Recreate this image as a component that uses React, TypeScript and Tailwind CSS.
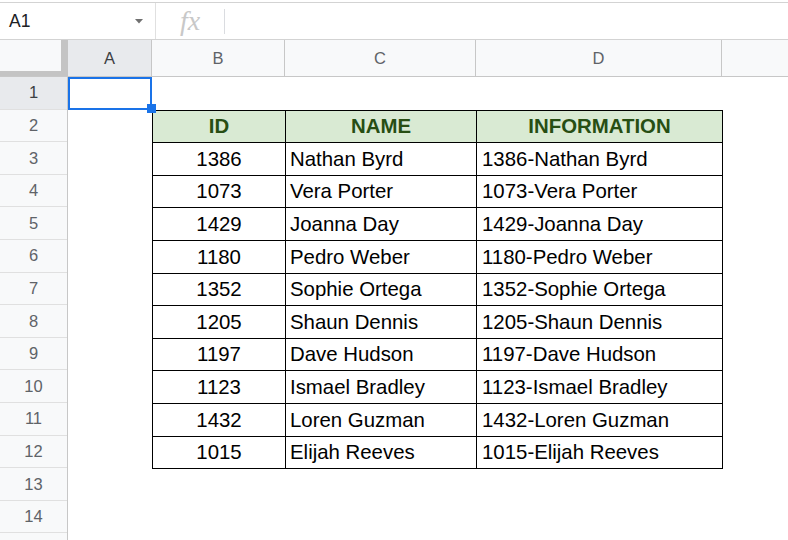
import React from "react";

const rows: [string, string][] = [
  ["1386", "Nathan Byrd"],
  ["1073", "Vera Porter"],
  ["1429", "Joanna Day"],
  ["1180", "Pedro Weber"],
  ["1352", "Sophie Ortega"],
  ["1205", "Shaun Dennis"],
  ["1197", "Dave Hudson"],
  ["1123", "Ismael Bradley"],
  ["1432", "Loren Guzman"],
  ["1015", "Elijah Reeves"],
];

const rowNums = Array.from({ length: 15 }, (_, i) => i + 1);

export default function App() {
  return (
    <div className="w-[788px] h-[540px] overflow-hidden bg-white font-['Liberation_Sans',Arial,sans-serif] relative">
      {/* formula bar */}
      <div className="pt-[2px]">
        <div className="h-[38px] border-t border-b border-[#d3d3d3] flex items-center">
          <div className="w-[156px] h-full flex items-center justify-between pl-[9px] pr-[12px] border-r border-[#e0e0e0]">
            <span className="text-[17.5px] text-[#202124]">A1</span>
            <svg width="8" height="5" viewBox="0 0 8 5">
              <path d="M0 0 L8 0 L4 4.5 Z" fill="#707070" />
            </svg>
          </div>
          <div className="w-[69px] h-full flex items-center">
            <div className="flex-1 flex justify-center">
              <span className="font-['Liberation_Serif',serif] italic text-[28px] text-[#c8c8c8] leading-none">fx</span>
            </div>
            <div className="w-px h-[25px] bg-[#dadce0]" />
          </div>
          <div className="flex-1" />
        </div>
      </div>

      {/* column headers */}
      <div className="h-[37px] flex border-b border-[#c7c7c7] bg-[#f8f9fa] text-[16.5px] text-[#5f6368]">
        <div className="w-[68px] h-full flex flex-col">
          <div className="flex-1 flex">
            <div className="flex-1" />
            <div className="w-[7px] bg-[#c4c4c4]" />
          </div>
          <div className="h-[5px] bg-[#c4c4c4]" />
        </div>
        <div className="w-[84px] h-full flex items-center justify-center bg-[#e8eaed] border-r border-[#c7c7c7] text-[#3c4043]">A</div>
        <div className="w-[133px] h-full flex items-center justify-center border-r border-[#c7c7c7]">B</div>
        <div className="w-[191px] h-full flex items-center justify-center border-r border-[#c7c7c7]">C</div>
        <div className="w-[246px] h-full flex items-center justify-center border-r border-[#c7c7c7]">D</div>
        <div className="flex-1 h-full" />
      </div>

      {/* body */}
      <div className="flex">
        <div className="w-[68px] border-r border-[#c7c7c7] bg-[#f8f9fa] text-[16.5px] text-[#5f6368] shrink-0">
          {rowNums.map((n) => (
            <div
              key={n}
              className={
                n === 1
                  ? "h-[32.6px] flex items-center justify-center border-b border-[#e0e0e0] bg-[#e8eaed] text-[#3c4043]"
                  : "h-[32.6px] flex items-center justify-center border-b border-[#e0e0e0]"
              }
            >
              {n < 15 ? n : ""}
            </div>
          ))}
        </div>
        <div className="flex-1 relative">
          <div className="h-[32.6px]" />
          <table className="ml-[84px] table-fixed border-collapse text-[20.4px] text-black">
            <colgroup>
              <col className="w-[133px]" />
              <col className="w-[191px]" />
              <col className="w-[246px]" />
            </colgroup>
            <tbody>
              <tr className="h-[32.6px] bg-[#d9ead3] font-bold text-[#274e13]">
                <td className="border border-black text-center p-0 leading-none">ID</td>
                <td className="border border-black text-center p-0 leading-none">NAME</td>
                <td className="border border-black text-center p-0 leading-none">INFORMATION</td>
              </tr>
              {rows.map(([id, name]) => (
                <tr key={id} className="h-[32.6px]">
                  <td className="border border-black text-center p-0 leading-none">{id}</td>
                  <td className="border border-black pl-[4px] p-0 leading-none">{name}</td>
                  <td className="border border-black pl-[5px] p-0 leading-none">
                    {id}-{name}
                  </td>
                </tr>
              ))}
            </tbody>
          </table>
          {/* selection */}
          <div className="absolute left-0 top-0 w-[84px] h-[33px] border-2 border-[#1a73e8]" />
          <div className="absolute left-[79px] top-[27px] w-[9px] h-[9px] bg-[#1a73e8]" />
        </div>
      </div>
    </div>
  );
}
